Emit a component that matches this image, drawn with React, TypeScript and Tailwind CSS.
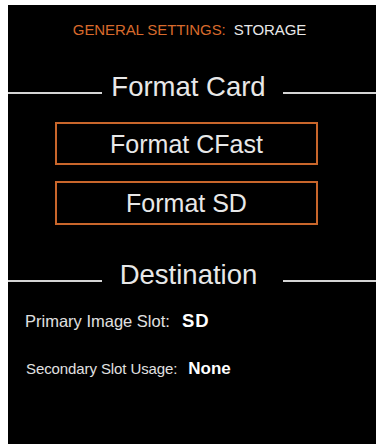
import React from "react";

const font = { fontFamily: '"Liberation Sans", Arial, sans-serif' };

function SectionHeading({ title, mt }: { title: string; mt: string }) {
  return (
    <div className={`flex items-start ${mt}`}>
      <div className="w-[94px] h-[2px] mt-[18px] bg-[#d4d4d4]" />
      <div className="w-[173px] text-center text-[27.5px] leading-[26px] text-[#e8e8e8]">{title}</div>
      <div className="flex-1 ml-[8px] h-[2px] mt-[18px] bg-[#d4d4d4]" />
    </div>
  );
}

function FormatButton({ label, mt, h }: { label: string; mt: string; h: string }) {
  return (
    <div
      className={`ml-[47px] w-[263px] ${h} ${mt} border-2 border-[#c9662b] flex items-center justify-center text-[25px] leading-[24px] text-[#e8e8e8]`}
    >
      {label}
    </div>
  );
}

export default function App() {
  return (
    <div className="w-[376px] h-[448px] bg-white pl-[8px] pt-[5px]" style={font}>
      <div className="h-[439px] bg-black flex flex-col">
        <div className="mt-[18px] pr-[5px] text-center text-[15px] leading-[14px] tracking-[-0.1px]">
          <span className="text-[#d86a2c]">GENERAL SETTINGS:</span>
          <span className="text-[#e8e8e8]">&nbsp; STORAGE</span>
        </div>
        <SectionHeading title="Format Card" mt="mt-[37px]" />
        <FormatButton label="Format CFast" mt="mt-[22px]" h="h-[43px]" />
        <FormatButton label="Format SD" mt="mt-[16px]" h="h-[44px]" />
        <SectionHeading title="Destination" mt="mt-[37px]" />
        <div className="mt-[25px] ml-[17px] flex items-baseline text-[16.5px] leading-[16px] text-[#e0e0e0]">
          <span>Primary Image Slot:</span>
          <span className="ml-[12px] font-bold text-[18.5px] tracking-[1px] text-white">SD</span>
        </div>
        <div className="mt-[33px] ml-[18px] flex items-baseline text-[15px] leading-[14px] text-[#e0e0e0] tracking-[-0.1px]">
          <span>Secondary Slot Usage:</span>
          <span className="ml-[11px] font-bold text-[17px] text-white tracking-normal">None</span>
        </div>
      </div>
    </div>
  );
}
